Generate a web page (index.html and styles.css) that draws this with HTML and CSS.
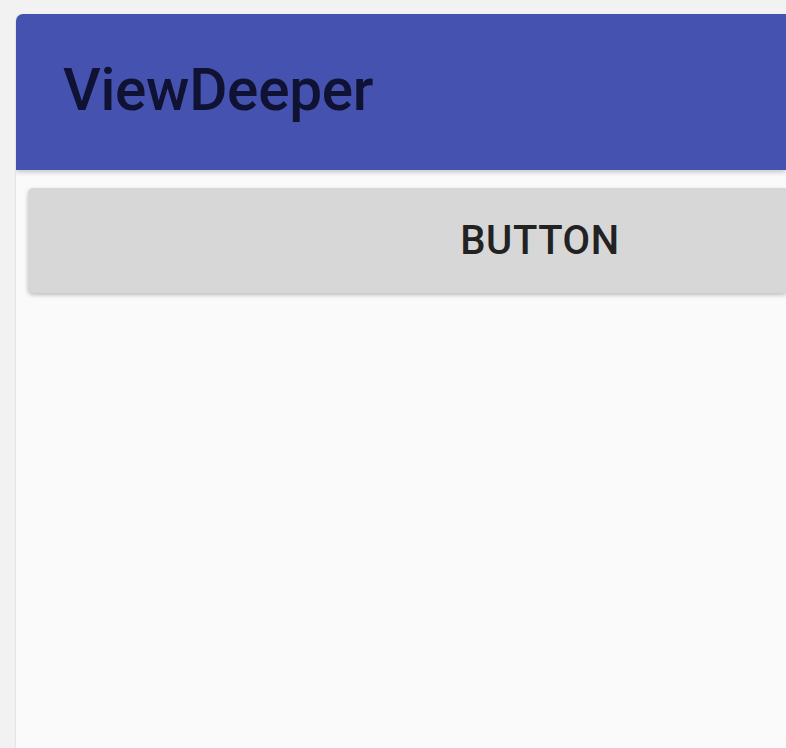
FILE: index.html
```html
<!DOCTYPE html>
<html>
<head>
<meta charset="utf-8">
<link rel="stylesheet" href="styles.css">
</head>
<body>
<div class="card">
  <header class="appbar"><h1 class="title">ViewDeeper</h1></header>
  <main class="content">
    <button class="btn">BUTTON</button>
  </main>
</div>
</body>
</html>
```
FILE: styles.css
```css
html, body { margin: 0; padding: 0; }
body {
  background: #f2f2f2;
  width: 786px;
  height: 748px;
  overflow: hidden;
  font-family: Roboto, "Noto Sans", sans-serif;
}
.card {
  margin: 14px 0 0 16px;
  height: 734px;
  background: #fafafa;
  border-radius: 7px 0 0 0;
  overflow: hidden;
  display: flex;
  flex-direction: column;
  box-shadow: -1px 0 1px rgba(0,0,0,0.06);
}
.appbar {
  height: 156px;
  background: #4652b0;
  display: flex;
  align-items: center;
  padding-left: 47px;
  box-shadow: 0 2px 5px rgba(0,0,0,0.22);
  position: relative;
  z-index: 1;
  flex-shrink: 0;
}
.title {
  margin: 0;
  font-size: 58.5px;
  font-weight: 500;
  color: #0f1232;
  letter-spacing: -0.3px;
  padding-bottom: 4px;
}
.content {
  flex: 1;
  padding: 18px 0 18px 12px;
}
.btn {
  display: block;
  width: 100%;
  height: 105px;
  border: none;
  border-radius: 5px 0 0 5px;
  background: #d7d7d7;
  box-shadow: 0 2px 4px rgba(0,0,0,0.25);
  font-family: Roboto, sans-serif;
  font-size: 40px;
  font-weight: 500;
  color: #222;
  letter-spacing: 0.6px;
  padding: 0 0 0 266px;
  text-align: center;
}
```
